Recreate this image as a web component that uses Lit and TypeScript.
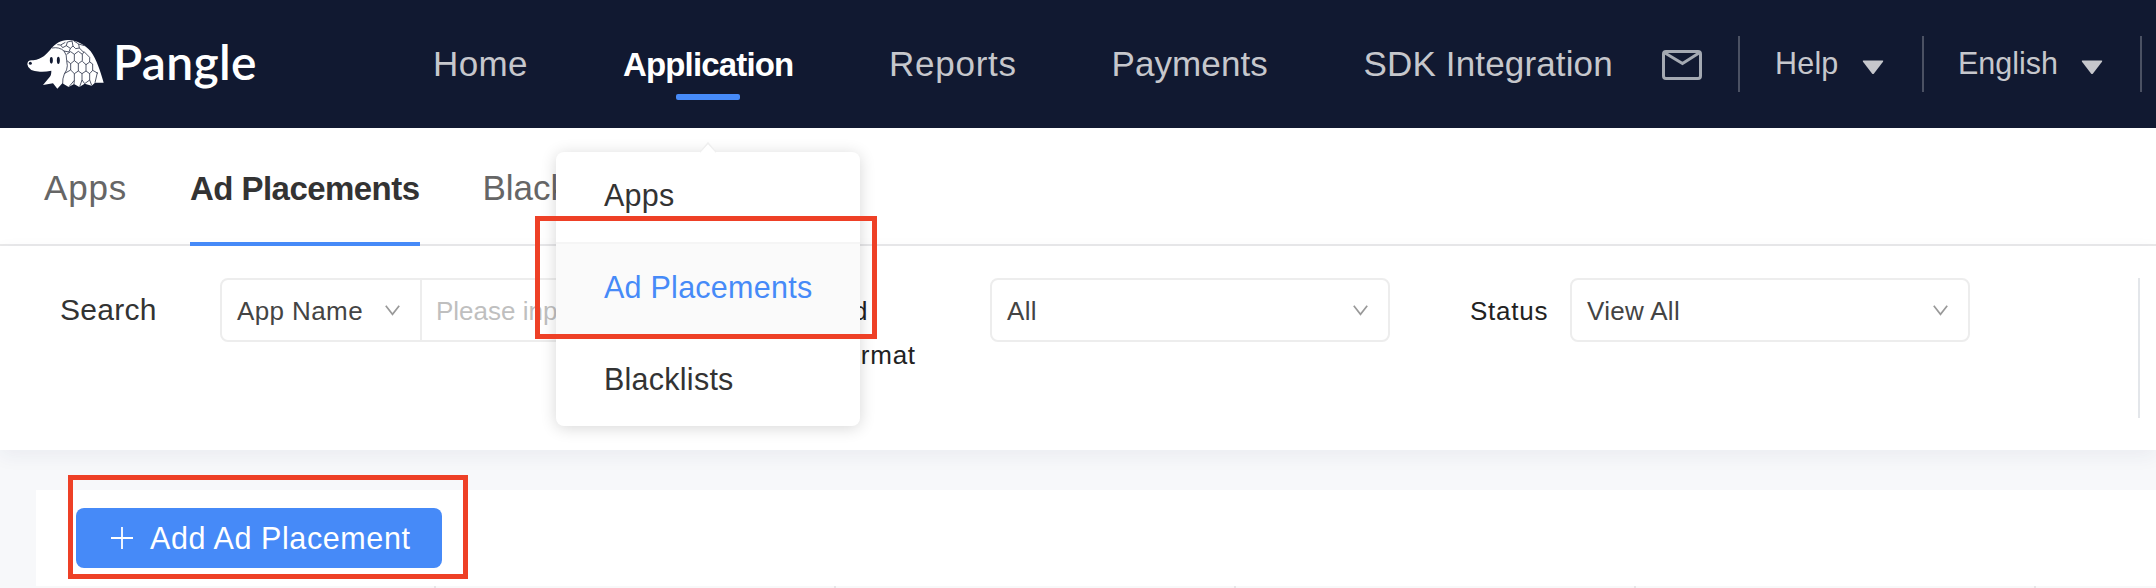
import { LitElement, html, css } from "lit";
import { customElement } from "lit/decorators.js";

const chevron = html`<svg class="chev" width="15" height="11" viewBox="0 0 15 11"><path d="M.8.8 7.500 9.300 14.200.8" fill="none" stroke="#999" stroke-width="1.700"/></svg>`;
const caret = html`<svg class="caret" width="22" height="15" viewBox="0 0 22 15"><path d="M1.500.5h19q1.200 0 .5 1.200L12 13.500q-1 1-2 0L1 1.700Q.3.5 1.500.5z" fill="#c6c7cc"/></svg>`;
const mail = html`<svg class="mail" width="40" height="30" viewBox="0 0 40 30" fill="none" stroke="#a4a9b2" stroke-width="3"><rect x="1.500" y="1.500" width="37" height="27" rx="2.500"/><path d="M3 3 20.500 13.500 37 3"/></svg>`;
const plus = html`<svg class="plus" width="22" height="22" viewBox="0 0 22 22"><path d="M11 0v22M0 11h22" stroke="#fff" stroke-width="1.800"/></svg>`;
const pangolin = html`
  <svg class="mark" width="90" height="60" viewBox="0 0 270 180">
    <path fill="#fff" d="M16 91C16 82 22 77 34 79C60 76 74 60 86 46C99 29 116 18 138 18C166 18 190 34 206 52C224 76 235 112 245 146L219 146L209 155L188 149L172 159L156 150L140 159L121 148L106 164L93 148L63 153L83 129Q88 124 88 110Q70 114 54 113Q18 112 16 91z"/>
    <g fill="none" stroke="#111931" stroke-width="2.200" stroke-linejoin="round">
      <path d="M90 42Q112 38 126 51Q135 61 134 80L136 95Q136 108 127 120Q121 134 122 150"/>
      <path d="M106 32l10 1 6 8 11-6 12 8-4 11M116 33l14-8M133 35l3-11 14-3M145 43l8-7 8 8 11-2 12 12M153 36l-3-15M172 42l-2-12-14-9M170 30l17 5M126 51l15 3"/>
      <path d="M134 61l12-8 11 8v19l-11 9-11-9M157 61l12-9 12 9v19l-12 9-12-9M181 61l5-8 17 17v14l-11 8-11-10M203 84l9 6M146 89v19l-18 10M169 89v22M192 91v20M212 90v19M146 108l11 11 12-8 11 8 12-8 11 8 9-10 16 9M157 119v20l-1 11M180 119v19l-7 20M157 139l-16 19M180 138l8 11M203 119v19l-15 11M203 138l6 16M226 116l-7 30"/>
    </g>
    <g fill="#111931"><ellipse cx="88" cy="79" rx="4.500" ry="10"/><ellipse cx="109" cy="79" rx="4.500" ry="11"/><circle cx="25" cy="88" r="4.500"/></g>
  </svg>`;

@customElement("app-root")
export class AppRoot extends LitElement {
  static styles = css`
    :host { display: block; width: 2156px; height: 588px; overflow: hidden; position: relative; background: #f7f8fa; font-family: "Liberation Sans", Arial, sans-serif; color: #333; }
    * { box-sizing: border-box; }
    svg { display: block; flex: none; }
    div, span { white-space: nowrap; flex: none; }

    .header { height: 128px; background: #111931; display: flex; color: #c6c7cc; font-size: 35px; line-height: 128px; overflow: hidden; }
    .logo { display: flex; width: 433px; padding-left: 22px; }
    .mark { margin-top: 34px; }
    .brand { font: 600 48px/124px Lato, sans-serif; color: #fff; margin-left: 1px; letter-spacing: .3px; }
    .home { width: 190px; letter-spacing: .4px; }
    .application { width: 266px; color: #fff; font-size: 33px; line-height: 129px; font-weight: 700; letter-spacing: -0.85px; }
    .bar { width: 64px; height: 6px; border-radius: 2px; background: #468af8; margin: -35px 0 0 53px; }
    .reports { width: 222.500px; letter-spacing: .75px; }
    .payments { width: 252px; letter-spacing: .1px; }
    .sdk { width: 298.500px; letter-spacing: .15px; }
    .mail { margin: 50px 36px 0 0; }
    .rule { width: 2px; height: 56px; margin-top: 36px; background: #4b5163; }
    .lang { display: flex; font-size: 30.500px; line-height: 127px; }
    .help { width: 182px; padding-left: 35px; letter-spacing: .2px; }
    .english { width: 216px; padding-left: 34px; letter-spacing: 0; }
    .lang .caret { margin: 60px 20px 0 auto; }
    .help .caret { margin-right: 38px; }
    .english .caret { margin-right: 37px; }

    .tabs { height: 118px; background: #fff; border-bottom: 2px solid #e9e9ea; display: flex; font-size: 35px; line-height: 120px; color: #666; padding-left: 44px; }
    .t1 { width: 146px; letter-spacing: .8px; }
    .t2 { width: 230px; height: 118px; border-bottom: 4px solid #468af8; color: #333; font-weight: 700; font-size: 33px; letter-spacing: -.55px; margin-right: 62.500px; line-height: 121px; }
    .t3 { letter-spacing: 0; }

    .filters { height: 204px; background: #fff; padding-top: 32px; display: flex; font-size: 26px; box-shadow: 0 6px 18px rgba(40, 50, 110, .06); }
    .search { width: 220px; padding-left: 60px; font-size: 30px; line-height: 63px; letter-spacing: .3px; }
    .box { height: 64px; border: 2px solid #ededed; border-radius: 8px; line-height: 62px; color: #444; display: flex; }
    .box .chev { margin: 25px 20px 0 auto; }
    .combo { width: 400px; }
    .kind { width: 200px; padding-left: 15px; border-right: 2px solid #ededed; display: flex; letter-spacing: .4px; }
    .ph { padding-left: 14px; color: #bfbfbf; }
    .label { color: #222; line-height: 44px; padding-top: 11px; letter-spacing: .75px; }
    .format { width: 161px; margin-left: 209px; }
    .format div:first-child { padding-left: 6px; }
    .status { width: 100px; margin-left: 80px; letter-spacing: .75px; }
    .sel { width: 400px; padding-left: 15px; letter-spacing: .3px; }
    .split { width: 2px; height: 140px; background: #e3e6ea; margin-left: 168px; }

    .card { margin: 40px 0 0 36px; height: 96px; background: #fff; padding: 18px 0 0 40px; }
    .button { width: 366px; height: 60px; border-radius: 8px; background: #468af8; color: #fff; display: flex; font-size: 30.500px; line-height: 60px; letter-spacing: .6px; padding-left: 35px; }
    .plus { margin: 19px 17px 0 0; }
    .row { display: flex; height: 2px; margin-left: 36px; background: #f8f8f9; }
    .cell { width: 400px; border-right: 2px solid #e6e6e8; }

    .menu { position: absolute; left: 556px; top: 152px; width: 304px; height: 274px; background: #fff; border-radius: 8px; box-shadow: 0 2px 16px rgba(0, 0, 0, .16); font-size: 30.500px; line-height: 87px; letter-spacing: .25px; }
    .tip { position: absolute; left: 144px; top: -10px; }
    .item { height: 92px; padding-left: 48px; border-bottom: 2px solid #f5f5f5; }
    .item:last-child { border: 0; }
    .hover { color: #468af8; background: #fafafa; }
    .mark-box { position: absolute; border: 5px solid #ee4026; }
    .m1 { left: 535px; top: 216px; width: 342px; height: 123px; }
    .m2 { left: 68px; top: 475px; width: 400px; height: 104px; }
  `;

  render() {
    return html`
      <div class="header">
        <div class="logo">${pangolin}<span class="brand">Pangle</span></div>
        <div class="home">Home</div>
        <div class="application">Application<div class="bar"></div></div>
        <div class="reports">Reports</div>
        <div class="payments">Payments</div>
        <div class="sdk">SDK Integration</div>
        ${mail}
        <div class="rule"></div>
        <div class="lang help">Help${caret}</div>
        <div class="rule"></div>
        <div class="lang english">English${caret}</div>
        <div class="rule"></div>
      </div>
      <div class="tabs">
        <div class="t1">Apps</div>
        <div class="t2">Ad Placements</div>
        <div class="t3">Blacklists</div>
      </div>
      <div class="filters">
        <div class="search">Search</div>
        <div class="box combo">
          <div class="kind">App Name${chevron}</div>
          <div class="ph">Please input</div>
        </div>
        <div class="label format"><div>Ad</div><div>Format</div></div>
        <div class="box sel">All${chevron}</div>
        <div class="label status">Status</div>
        <div class="box sel">View All${chevron}</div>
        <div class="split"></div>
      </div>
      <div class="card">
        <div class="button">${plus}<span>Add Ad Placement</span></div>
      </div>
      <div class="row">${[1, 2, 3, 4, 5].map(() => html`<div class="cell"></div>`)}</div>
      <div class="menu">
        <svg class="tip" width="16" height="11" viewBox="0 0 16 11"><path d="M0 10.500 8 1l8 9.500" fill="#fff" stroke="#efefef" stroke-width="1.500"/><path d="M0 11 8 3l8 8z" fill="#fff"/></svg>
        <div class="item">Apps</div>
        <div class="item hover">Ad Placements</div>
        <div class="item">Blacklists</div>
      </div>
      <div class="mark-box m1"></div>
      <div class="mark-box m2"></div>
    `;
  }
}
